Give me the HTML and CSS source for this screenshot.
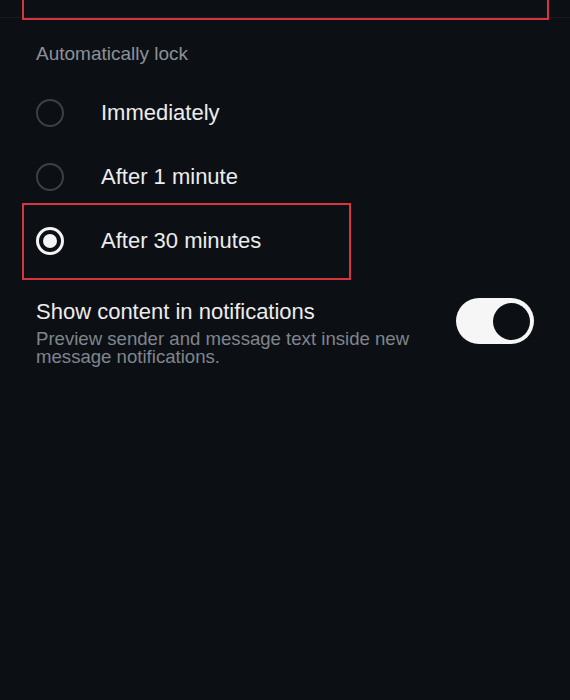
FILE: index.html
```html
<!DOCTYPE html>
<html lang="en">
<head>
<meta charset="utf-8">
<title>Privacy settings</title>
<link rel="stylesheet" href="styles.css">
</head>
<body>
<div class="screen">
  <div class="prev-section">
    <div class="prev-highlight"></div>
  </div>

  <div class="group-label">Automatically lock</div>

  <div class="radio-list">
    <div class="radio-row">
      <span class="radio"></span>
      <span class="radio-text">Immediately</span>
    </div>
    <div class="radio-row">
      <span class="radio"></span>
      <span class="radio-text">After 1 minute</span>
    </div>
    <div class="highlight">
      <div class="radio-row">
        <span class="radio radio-checked"><span class="radio-dot"></span></span>
        <span class="radio-text">After 30 minutes</span>
      </div>
    </div>
  </div>

  <div class="setting">
    <div class="setting-text">
      <div class="setting-title">Show content in notifications</div>
      <div class="setting-desc">Preview sender and message text inside new message notifications.</div>
    </div>
    <div class="toggle"><span class="toggle-knob"></span></div>
  </div>
</div>
</body>
</html>
```

FILE: styles.css
```css
html, body {
  margin: 0;
  padding: 0;
  background: #0c1015;
}

.screen {
  width: 570px;
  height: 700px;
  overflow: hidden;
  background: #0c1015;
  font-family: "Liberation Sans", Arial, sans-serif;
  color: #ececec;
  display: flex;
  flex-direction: column;
}

.prev-section {
  display: flow-root;
  height: 17px;
  border-bottom: 1px solid #171b21;
  padding: 0 21px 0 22px;
  flex-shrink: 0;
}

.prev-highlight {
  height: 40px;
  margin-top: -24px;
  border: 2px solid #d7353d;
}

.group-label {
  margin-top: 25px;
  padding-left: 36px;
  font-size: 19px;
  line-height: 22px;
  color: #8c9097;
}

.radio-list {
  margin-top: 16px;
  display: flex;
  flex-direction: column;
}

.radio-row {
  height: 64px;
  display: flex;
  align-items: center;
  padding-left: 36px;
}

.radio {
  width: 28px;
  height: 28px;
  box-sizing: border-box;
  border-radius: 50%;
  border: 2px solid #3b4047;
  display: flex;
  align-items: center;
  justify-content: center;
}

.radio-checked {
  border: 3px solid #f4f4f4;
}

.radio-dot {
  width: 14px;
  height: 14px;
  border-radius: 50%;
  background: #f4f4f4;
}

.radio-text {
  margin-left: 37px;
  font-size: 22px;
  color: #ececec;
}

.highlight {
  margin: -6px 0 0 22px;
  width: 329px;
  box-sizing: border-box;
  border: 2px solid #d7353d;
  padding: 4px 0 5px;
}

.highlight .radio-row {
  padding-left: 12px;
}

.setting {
  margin-top: 19px;
  display: flex;
  align-items: flex-start;
  justify-content: space-between;
  padding: 0 36px 0 36px;
}

.setting-text {
  max-width: 400px;
}

.setting-title {
  font-size: 22px;
  line-height: 26px;
  color: #ececec;
}

.setting-desc {
  margin-top: 5px;
  font-size: 18.6px;
  line-height: 18px;
  color: #80858c;
}

.toggle {
  margin-top: -1px;
  width: 78px;
  height: 46px;
  border-radius: 23px;
  background: #f6f6f6;
  display: flex;
  align-items: center;
  justify-content: flex-end;
  padding-right: 4px;
  box-sizing: border-box;
  flex-shrink: 0;
}

.toggle-knob {
  width: 37px;
  height: 37px;
  border-radius: 50%;
  background: #0c1015;
}
```
